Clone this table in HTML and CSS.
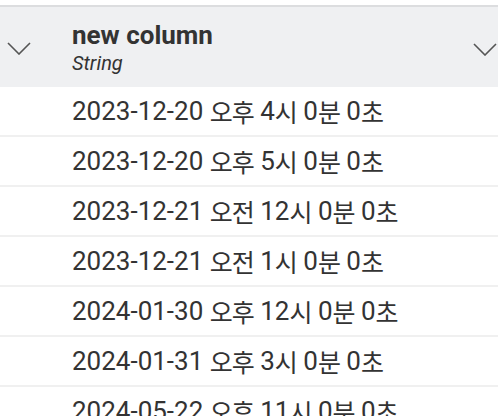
FILE: index.html
```html
<!DOCTYPE html>
<html lang="ko">
<head>
<meta charset="utf-8">
<link rel="stylesheet" href="styles.css">
</head>
<body>
<div class="table">
  <div class="header">
    <div class="chev-cell left">
      <svg width="24" height="13" viewBox="0 0 24 13"><path d="M1 1 L12 12 L23 1" fill="none" stroke="#555" stroke-width="1.6"/></svg>
    </div>
    <div class="title">
      <div class="name">new column</div>
      <div class="type">String</div>
    </div>
    <div class="chev-cell right">
      <svg width="24" height="13" viewBox="0 0 24 13"><path d="M1 1 L12 12 L23 1" fill="none" stroke="#555" stroke-width="1.6"/></svg>
    </div>
  </div>
  <div class="row">2023-12-20 <span class="ko">오후</span> 4<span class="ko">시</span> 0<span class="ko">분</span> 0<span class="ko">초</span></div>
  <div class="row">2023-12-20 <span class="ko">오후</span> 5<span class="ko">시</span> 0<span class="ko">분</span> 0<span class="ko">초</span></div>
  <div class="row">2023-12-21 <span class="ko">오전</span> 12<span class="ko">시</span> 0<span class="ko">분</span> 0<span class="ko">초</span></div>
  <div class="row">2023-12-21 <span class="ko">오전</span> 1<span class="ko">시</span> 0<span class="ko">분</span> 0<span class="ko">초</span></div>
  <div class="row">2024-01-30 <span class="ko">오후</span> 12<span class="ko">시</span> 0<span class="ko">분</span> 0<span class="ko">초</span></div>
  <div class="row">2024-01-31 <span class="ko">오후</span> 3<span class="ko">시</span> 0<span class="ko">분</span> 0<span class="ko">초</span></div>
  <div class="row">2024-05-22 <span class="ko">오후</span> 11<span class="ko">시</span> 0<span class="ko">분</span> 0<span class="ko">초</span></div>
</div>
</body>
</html>
```
FILE: styles.css
```css
html, body {
  margin: 0;
  padding: 0;
  background: #fff;
  overflow: hidden;
}
body {
  padding-top: 5px;
  font-family: Roboto, "Noto Sans CJK KR", sans-serif;
  color: #333;
}
.table {
  height: 411px;
  overflow: hidden;
}
.header {
  display: flex;
  align-items: center;
  height: 80px;
  background: #eff0f2;
  border-top: 2px solid #dcdddf;
}
.chev-cell {
  display: flex;
  align-items: center;
  justify-content: center;
}
.chev-cell.left {
  width: 38px;
  padding-top: 2px;
}
.chev-cell.right {
  width: 24px;
  margin-left: auto;
  margin-right: 1px;
  padding-top: 4px;
}
.title {
  padding-left: 34px;
  display: flex;
  flex-direction: column;
}
.name {
  font-weight: 700;
  font-size: 26px;
  line-height: 30px;
  color: #333;
}
.type {
  font-style: italic;
  font-size: 20px;
  line-height: 24px;
  margin-top: 1px;
  color: #333;
}
.row {
  height: 48px;
  border-bottom: 2px solid #f0f0f0;
  display: flex;
  align-items: center;
  padding-left: 72px;
  font-size: 26px;
  color: #333;
  white-space: pre;
}
.row:first-of-type { height: 46px; }
.ko {
  font-family: "Noto Sans CJK KR", sans-serif;
  font-size: 25px;
  letter-spacing: -1px;
  font-weight: 400;
}
```
